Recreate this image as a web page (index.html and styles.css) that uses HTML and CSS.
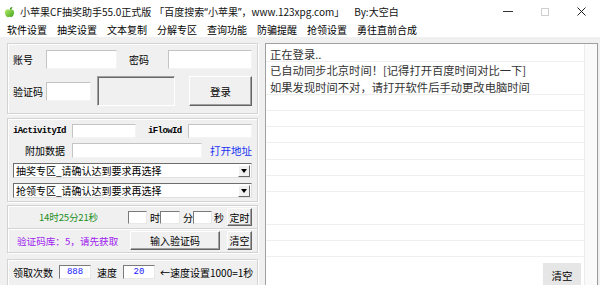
FILE: index.html
```html
<!DOCTYPE html>
<html lang="zh-CN">
<head>
<meta charset="utf-8">
<title>小苹果CF抽奖助手</title>
<link rel="stylesheet" href="styles.css">
</head>
<body>
<div class="window">
  <div class="titlebar">
    <svg class="appicon" viewBox="0 0 12 12" aria-hidden="true">
      <defs>
        <linearGradient id="ag" x1="0" y1="0" x2="1" y2="1">
          <stop offset="0" stop-color="#b6ef6a"/>
          <stop offset="1" stop-color="#3f9f1c"/>
        </linearGradient>
      </defs>
      <path d="M6 3.6 C4.6 2.6 1.2 2.7 1 6.2 C0.9 9 3 11.8 4.4 11.6 C5.2 11.5 5.4 11.1 6 11.1 C6.6 11.1 6.8 11.5 7.6 11.6 C9 11.8 11.1 9 11 6.2 C10.8 2.7 7.4 2.6 6 3.6 Z" fill="url(#ag)"/>
      <path d="M6.2 3.4 C6.3 1.8 7.4 0.6 9.2 0.5 C9 2.1 7.9 3.3 6.2 3.4 Z" fill="#2f8a14"/>
    </svg>
    <span class="title">小苹果CF抽奖助手55.0正式版<span class="t2">「百度搜索<span class="q">“</span>小苹果<span class="q">”</span>，www.123xpg.com」</span><span class="t3">By:大空白</span></span>
    <div class="controls">
      <span class="ctl"><span class="min"></span></span>
      <span class="ctl"><span class="max"></span></span>
      <span class="ctl">
        <svg class="close" viewBox="0 0 9 9" aria-hidden="true"><path d="M0.5 0.5 L8.5 8.5 M8.5 0.5 L0.5 8.5" stroke="#222" stroke-width="1"/></svg>
      </span>
    </div>
  </div>

  <div class="menubar">
    <span class="mi">软件设置</span>
    <span class="mi">抽奖设置</span>
    <span class="mi">文本复制</span>
    <span class="mi">分解专区</span>
    <span class="mi">查询功能</span>
    <span class="mi">防骗提醒</span>
    <span class="mi">抢领设置</span>
    <span class="mi">勇往直前合成</span>
  </div>

  <div class="client">
    <div class="left">
      <div class="group g1">
        <div class="row r1">
          <span class="lbl w33">账号</span>
          <span class="edit e71"></span>
          <span class="lbl w51 pl12">密码</span>
          <span class="edit e84"></span>
        </div>
        <div class="row r2">
          <span class="lbl w33">验证码</span>
          <span class="edit e45"></span>
          <span class="captcha"></span>
          <span class="btn b-login">登录</span>
        </div>
      </div>

      <div class="group g2">
        <div class="row ra">
          <span class="lbl mono w59">iActivityId</span>
          <span class="edit e64"></span>
          <span class="lbl mono w52 pl12">iFlowId</span>
          <span class="edit e64"></span>
        </div>
        <div class="row rb">
          <span class="lbl w59 right">附加数据</span>
          <span class="edit e130"></span>
          <span class="link">打开地址</span>
        </div>
        <div class="combo"><span class="ctext">抽奖专区_请确认达到要求再选择</span><span class="arrow"></span></div>
        <div class="combo c2"><span class="ctext">抢领专区_请确认达到要求再选择</span><span class="arrow"></span></div>
      </div>

      <div class="group g3">
        <div class="row rt">
          <span class="clock">14时25分21秒</span>
          <span class="edit small e19"></span>
          <span class="lbl unit">时</span>
          <span class="edit small e20"></span>
          <span class="lbl unit">分</span>
          <span class="edit small e19"></span>
          <span class="lbl unit u15">秒</span>
          <span class="btn b-small">定时</span>
        </div>
        <div class="row rc">
          <span class="pool">验证码库：5，请先获取</span>
          <span class="btn b-input">输入验证码</span>
          <span class="btn b-small b-clear">清空</span>
        </div>
      </div>

      <div class="group g4">
        <div class="row rn">
          <span class="lbl w46">领取次数</span>
          <span class="edit num e32">888</span>
          <span class="lbl w32 pl6">速度</span>
          <span class="edit num e32">20</span>
          <span class="lbl note">←速度设置1000=1秒</span>
        </div>
      </div>
    </div>

    <div class="log">
      <div class="col">
        <div class="line">正在登录..</div>
        <div class="line">已自动同步北京时间！[记得打开百度时间对比一下]</div>
        <div class="line">如果发现时间不对，请打开软件后手动更改电脑时间</div>
      </div>
      <div class="tail"></div>
      <span class="logclear">清空</span>
    </div>
  </div>
</div>
</body>
</html>
```

FILE: styles.css
```css
* { box-sizing: border-box; }
html, body { margin: 0; padding: 0; }
body {
  width: 600px;
  height: 285px;
  overflow: hidden;
  background: #f0f0f0;
  font-family: "Noto Sans CJK SC", "Noto Sans", sans-serif;
  font-size: 10px;
  color: #000;
}
.window { width: 600px; height: 285px; overflow: hidden; }

/* title bar */
.titlebar {
  height: 23px;
  background: #fff;
  display: flex;
  align-items: center;
}
.appicon { width: 11px; height: 12px; margin-left: 4px; flex: none; }
.title { margin-left: 5px; font-size: 10px; white-space: nowrap; color: #111; }
.t2 { margin-left: 3px; }
.t3 { margin-left: 10px; }
.q { font-family: "Noto Sans", sans-serif; }
.controls { margin-left: auto; display: flex; height: 23px; }
.ctl { width: 37px; display: flex; align-items: center; justify-content: center; }
.min { width: 10px; height: 1px; background: #333; }
.max { width: 8px; height: 8px; border: 1px solid #cfcfcf; }
.close { width: 9px; height: 9px; }

/* menu */
.menubar {
  height: 14px;
  background: #fff;
  display: flex;
  align-items: center;
  padding-left: 7px;
  padding-bottom: 1px;
  white-space: nowrap;
}
.mi { margin-right: 10px; line-height: 12px; }

/* client */
.client { display: flex; padding: 6px 0 0 7px; }
.left { width: 251px; flex: none; }

.group {
  border: 1px solid #d3d3d3;
  box-shadow: inset 1px 1px 0 #fff, 1px 1px 0 #fff;
}
.row { display: flex; align-items: center; }
.lbl { display: flex; align-items: center; white-space: nowrap; flex: none; }
.w33 { width: 33px; }
.w46 { width: 46px; }
.w51 { width: 51px; }
.w52 { width: 52px; }
.w59 { width: 59px; }
.w32 { width: 32px; }
.pl12 { padding-left: 12px; }
.pl6 { padding-left: 6px; }
.right { justify-content: flex-end; padding-right: 7px; }
.mono {
  font-family: "Liberation Mono", monospace;
  font-weight: bold;
  font-size: 9px;
  letter-spacing: -0.6px;
}

.edit {
  display: block;
  flex: none;
  background: #fff;
  border: 1px solid;
  border-color: #c4c4c4 #f4f4f4 #f4f4f4 #c4c4c4;
}
.r1 .edit, .r2 .edit { height: 19px; }
.e71 { width: 71px; }
.e84 { width: 84px; }
.e45 { width: 45px; }
.e64 { width: 64px; height: 14px; }
.e130 { width: 130px; height: 15px; }
.e19 { width: 19px; }
.e20 { width: 20px; }
.e32 { width: 32px; }
.small { height: 13px; border-color: #7a7a7a #e8e8e8 #e8e8e8 #7a7a7a; }

.btn {
  display: flex;
  align-items: center;
  justify-content: center;
  flex: none;
  background: #f0f0f0;
  border: 1px solid;
  border-color: #fff #646464 #646464 #fff;
  box-shadow: inset -1px -1px 0 #a0a0a0;
  white-space: nowrap;
}

/* group 1 */
.g1 { height: 71px; padding: 6px 0 0 5px; }
.r1 { height: 19px; }
.r2 { height: 30px; margin-top: 7px; }
.captcha {
  width: 78px;
  height: 30px;
  margin-left: 6px;
  background: #f0f0f0;
  border: 1px solid;
  border-color: #a0a0a0 #fff #fff #a0a0a0;
  box-shadow: inset 1px 1px 0 #696969;
}
.b-login { width: 63px; height: 30px; margin-left: 14px; font-size: 10.5px; }

/* group 2 */
.g2 { height: 84px; margin-top: 4px; padding: 5px 0 0 5px; }
.ra { height: 14px; }
.rb { height: 15px; margin-top: 5px; }
.link { margin-left: 8px; color: #1a33f5; font-size: 10.5px; white-space: nowrap; }
.combo {
  width: 239px;
  height: 15px;
  margin-top: 5px;
  background: #fff;
  border: 1px solid;
  border-color: #6e6e6e #e0e0e0 #e0e0e0 #6e6e6e;
  display: flex;
  align-items: center;
}
.ctext { flex: 1; padding-left: 2px; white-space: nowrap; overflow: hidden; font-size: 10px; }
.arrow {
  width: 12px;
  height: 12px;
  margin-right: 1px;
  background: #f0f0f0;
  border: 1px solid;
  border-color: #fff #696969 #696969 #fff;
  position: relative;
}
.arrow::after {
  content: "";
  position: absolute;
  left: 2px;
  top: 3px;
  border-left: 3px solid transparent;
  border-right: 3px solid transparent;
  border-top: 4px solid #000;
}

/* group 3 */
.g3 { height: 48px; margin-top: 3px; }
.rt {
  height: 23px;
  border-bottom: 1px solid #d3d3d3;
  box-shadow: 0 1px 0 #fff;
}
.clock {
  width: 89px;
  margin-left: 31px;
  color: #1e8f1e;
  font-size: 9.6px;
  letter-spacing: -0.2px;
  white-space: nowrap;
  flex: none;
}
.unit { width: 13px; padding-left: 3px; }
.u15 { width: 15px; padding-left: 2px; }
.b-small { width: 25px; height: 18px; }
.rc { height: 23px; }
.pool {
  width: 113px;
  margin-left: 9px;
  color: #a020f0;
  white-space: nowrap;
  flex: none;
  font-size: 9.6px;
}
.b-input { width: 90px; height: 19px; }
.b-clear { height: 19px; margin-left: 7px; }

/* group 4 */
.g4 { height: 40px; margin-top: 6px; padding: 5px 0 0 5px; }
.rn { height: 14px; }
.num {
  height: 14px;
  color: #1515ff;
  display: flex;
  align-items: center;
  justify-content: center;
  font-family: "Liberation Mono", monospace;
  font-size: 9px;
  border-color: #7a7a7a #e8e8e8 #e8e8e8 #7a7a7a;
}
.note { margin-left: 5px; }

/* log */
.log {
  position: relative;
  width: 333px;
  height: 250px;
  margin-left: 7px;
  flex: none;
  background: #fff;
  border: 1px solid;
  border-color: #a0a0a0 #9a9a9a #9a9a9a #a0a0a0;
  display: flex;
}
.col {
  width: 319px;
  flex: none;
  padding-top: 2px;
  border-right: 1px solid #ececec;
  background-image: repeating-linear-gradient(to bottom, transparent 0, transparent 15.25px, #efefef 15.25px, #efefef 16.25px);
  background-position: 0 2px;
}
.line {
  height: 16.25px;
  line-height: 16.25px;
  padding-left: 4px;
  font-size: 11.3px;
  color: #333;
  white-space: nowrap;
}
.tail { flex: 1; background: #fafafa; }
.logclear {
  position: absolute;
  top: 219px;
  right: 16px;
  width: 38px;
  height: 24px;
  background: #e6e6e6;
  display: flex;
  align-items: center;
  justify-content: center;
  font-size: 10.5px;
}
```
